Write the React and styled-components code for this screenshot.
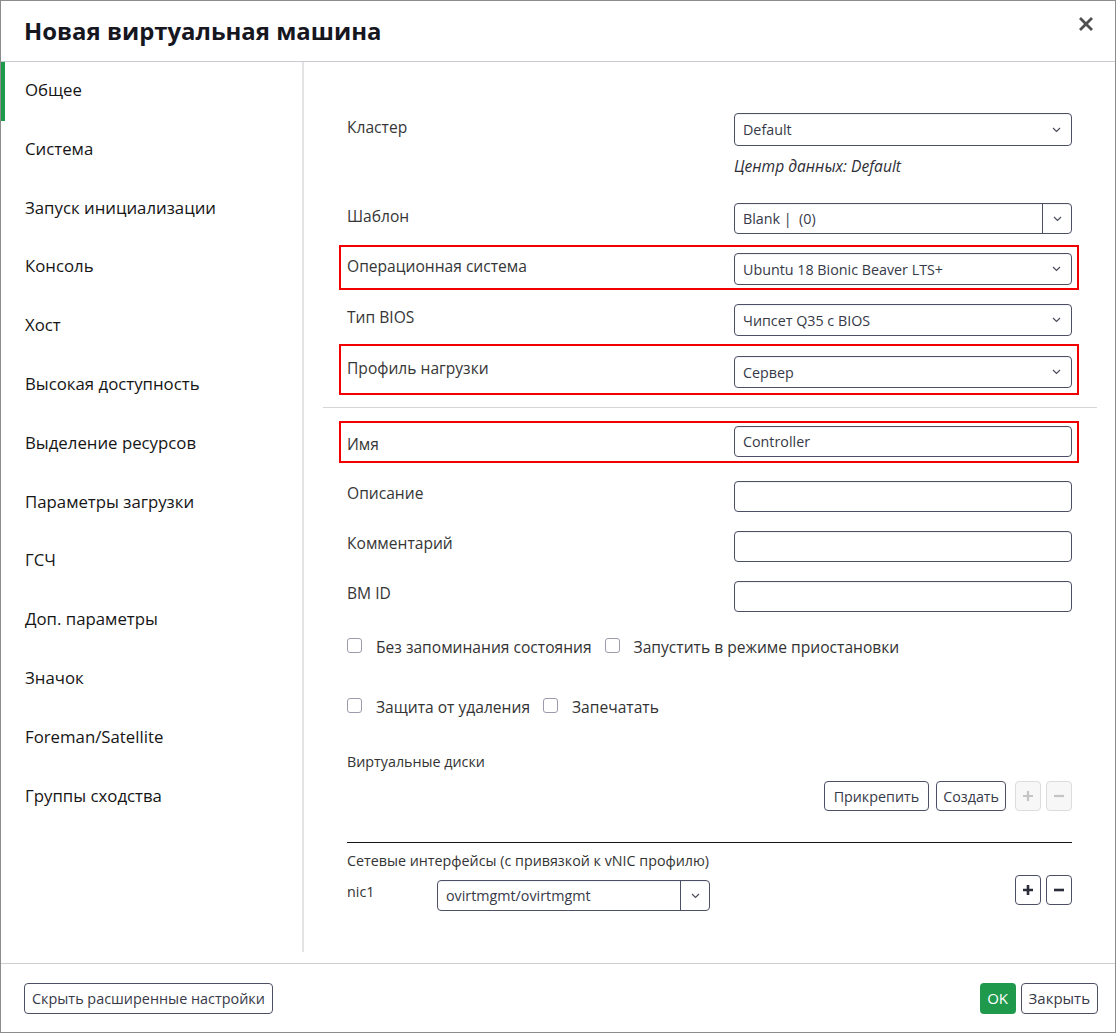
import React from "react";
import styled, { createGlobalStyle, css } from "styled-components";

const Global = createGlobalStyle`
  html, body { margin: 0; padding: 0; background: #fff; }
  body { font-family: "Open Sans", "Noto Sans", sans-serif; color: #151515; }
  * { box-sizing: border-box; }
`;

const Dialog = styled.div`
  width: 1116px;
  height: 1033px;
  border: 1px solid #8c8c8c;
  display: flex;
  flex-direction: column;
  background: #fff;
`;

const Header = styled.header`
  height: 61px;
  flex: none;
  display: flex;
  align-items: center;
  justify-content: space-between;
  padding: 0 20px 2px 23px;
  border-bottom: 1px solid #c9c9d1;
`;

const Title = styled.h1`
  margin: 0;
  font-size: 23.9px;
  font-weight: 700;
  color: #16161f;
`;

const CloseButton = styled.button`
  border: 0;
  background: none;
  padding: 0;
  width: 18px;
  height: 18px;
  display: flex;
  align-items: center;
  justify-content: center;
  margin-top: -12px;
`;

const Body = styled.div`
  flex: 1;
  display: flex;
  min-height: 0;
`;

const Sidebar = styled.nav`
  width: 303px;
  flex: none;
  display: flex;
  flex-direction: column;
  border-right: 2px solid #e4e4e4;
  margin-bottom: 11px;
`;

const NavItem = styled.div`
  height: 58.8px;
  flex: none;
  padding: 17px 0 0 20px;
  font-size: 16.8px;
  line-height: 22px;
  color: #151515;
  border-left: 4px solid ${(p) => (p.$active ? "#1f9a4d" : "transparent")};
`;

const Content = styled.section`
  flex: 1;
  padding: 51px 43px 0 43px;
  display: flex;
  flex-direction: column;
`;

const Spaced = styled.div`
  margin-top: ${(p) => p.$top || 0}px;
`;

const FieldRow = styled.div`
  display: grid;
  grid-template-columns: 387px 338px;
  align-items: start;
`;

const Marked = styled.div`
  margin: 0 -7px 0 -8px;
  border: 2px solid #f20000;
  padding: ${(p) => p.$pt}px 5px ${(p) => p.$pb}px 6px;
`;

const Label = styled.div`
  font-size: 15.6px;
  line-height: 22px;
  color: #363636;
  padding-top: ${(p) => (p.$pt != null ? p.$pt : 3)}px;
`;

const Hint = styled.div`
  margin-top: 9px;
  font-size: 15.6px;
  line-height: 22px;
  font-style: italic;
  color: #2e2e36;
`;

const boxBase = css`
  height: ${(p) => p.$h || 32}px;
  border: 1px solid #4d5064;
  border-radius: 4px;
  background: #fff;
  box-shadow: inset 0 1px 1px rgba(0, 0, 0, 0.06);
  font-size: 14.3px;
  color: #363948;
  display: flex;
  align-items: center;
`;

const SelectBox = styled.div`
  ${boxBase};
  padding: 0 10px 0 8px;
  justify-content: space-between;
`;

const SplitBox = styled.div`
  ${boxBase};
  width: ${(p) => p.$w || "100%"};
  overflow: hidden;
`;

const SplitText = styled.div`
  flex: 1;
  padding-left: 8px;
  height: 100%;
  display: flex;
  align-items: center;
`;

const SplitToggle = styled.div`
  width: 29px;
  height: 100%;
  border-left: 1px solid #4d5064;
  display: flex;
  align-items: center;
  justify-content: center;
`;

const TextInput = styled.div`
  ${boxBase};
  padding: 0 8px;
`;

const Chevron = () => (
  <svg width="9" height="6" viewBox="0 0 9 6">
    <polyline points="1,1 4.5,4.5 8,1" fill="none" stroke="#4a4d5c" strokeWidth="1.2" />
  </svg>
);

const Select = ({ children, h }) => (
  <SelectBox $h={h}>
    <span>{children}</span>
    <Chevron />
  </SelectBox>
);

const CheckRow = styled.div`
  display: flex;
  align-items: center;
  font-size: 15.6px;
  line-height: 22px;
  color: #333;
`;

const CheckItem = styled.label`
  display: flex;
  align-items: center;
  margin-right: 13px;
`;

const Box = styled.span`
  width: 15px;
  height: 15px;
  border: 1px solid #9a9cab;
  border-radius: 3px;
  background: #fff;
  margin-right: 14px;
  margin-top: -3px;
`;

const SmallLabel = styled.div`
  font-size: 14.3px;
  line-height: 20px;
  color: #333;
`;

const ButtonRow = styled.div`
  display: flex;
  justify-content: flex-end;
  align-items: center;
  gap: ${(p) => p.$gap || 7}px;
`;

const Button = styled.button`
  height: ${(p) => p.$h || 30}px;
  padding: 0 ${(p) => p.$px || 8}px;
  border: 1px solid #4d5064;
  border-radius: 4px;
  background: #fff;
  font-family: "Open Sans", sans-serif;
  font-size: ${(p) => p.$fs || 14.3}px;
  color: #363948;
  display: flex;
  align-items: center;
  justify-content: center;
`;

const IconButton = styled.button`
  width: 26px;
  height: 30px;
  padding: 0;
  border-radius: 4px;
  display: flex;
  align-items: center;
  justify-content: center;
  margin-left: ${(p) => p.$ml || 0}px;
  ${(p) =>
    p.$disabled
      ? css`
          border: 1px solid #dcdcdc;
          background: #f7f7f7;
        `
      : css`
          border: 1px solid #4d5064;
          background: #fff;
        `}
`;

const Divider = styled.hr`
  margin: 0;
  border: 0;
  border-top: 1px solid ${(p) => p.$color};
  margin-left: ${(p) => p.$ml || 0}px;
  margin-right: ${(p) => p.$mr || 0}px;
`;

const NicRow = styled.div`
  display: flex;
  align-items: flex-start;
`;

const NicName = styled.div`
  width: 90px;
  font-size: 14.3px;
  line-height: 20px;
  color: #333;
  padding-top: 2px;
`;

const NicButtons = styled.div`
  margin-left: auto;
  margin-top: -5px;
  display: flex;
  gap: 5px;
`;

const Footer = styled.footer`
  height: 69px;
  flex: none;
  border-top: 1px solid #cfcfcf;
  display: flex;
  align-items: center;
  justify-content: space-between;
  padding: 0 17px 0 23px;
`;

const OkButton = styled.button`
  height: 31px;
  width: 36px;
  border: 0;
  border-radius: 4px;
  background: #1f9a4d;
  color: #fff;
  font-family: "Open Sans", sans-serif;
  font-size: 15px;
  padding: 0;
`;

const Plus = ({ color, bold }) => (
  <svg width="12" height="12" viewBox="0 0 12 12">
    <path d="M6 1v10M1 6h10" stroke={color} strokeWidth={bold ? 2.6 : 2.2} />
  </svg>
);

const Minus = ({ color, bold }) => (
  <svg width="12" height="12" viewBox="0 0 12 12">
    <path d="M1 6h10" stroke={color} strokeWidth={bold ? 2.6 : 2.2} />
  </svg>
);

const nav = [
  "Общее",
  "Система",
  "Запуск инициализации",
  "Консоль",
  "Хост",
  "Высокая доступность",
  "Выделение ресурсов",
  "Параметры загрузки",
  "ГСЧ",
  "Доп. параметры",
  "Значок",
  "Foreman/Satellite",
  "Группы сходства",
];

export default function App() {
  return (
    <>
      <Global />
      <Dialog>
        <Header>
          <Title>Новая виртуальная машина</Title>
          <CloseButton aria-label="close">
            <svg width="14" height="14" viewBox="0 0 14 14">
              <path d="M2 2l10 10M12 2L2 12" stroke="#4f4f4f" strokeWidth="2.8" strokeLinecap="square" />
            </svg>
          </CloseButton>
        </Header>
        <Body>
          <Sidebar>
            {nav.map((n, i) => (
              <NavItem key={n} $active={i === 0}>
                {n}
              </NavItem>
            ))}
          </Sidebar>
          <Content>
            <FieldRow>
              <Label $pt={3}>Кластер</Label>
              <div>
                <Select h={33}>Default</Select>
                <Hint>Центр данных: Default</Hint>
              </div>
            </FieldRow>

            <Spaced $top={26}>
              <FieldRow>
                <Label $pt={2}>Шаблон</Label>
                <SplitBox $h={31}>
                  <SplitText>Blank |&nbsp; (0)</SplitText>
                  <SplitToggle>
                    <Chevron />
                  </SplitToggle>
                </SplitBox>
              </FieldRow>
            </Spaced>

            <Spaced $top={11}>
              <Marked $pt={6} $pb={3}>
                <FieldRow>
                  <Label $pt={2}>Операционная система</Label>
                  <Select>Ubuntu 18 Bionic Beaver LTS+</Select>
                </FieldRow>
              </Marked>
            </Spaced>

            <Spaced $top={14}>
              <FieldRow>
                <Label $pt={2}>Тип BIOS</Label>
                <Select>Чипсет Q35 с BIOS</Select>
              </FieldRow>
            </Spaced>

            <Spaced $top={8}>
              <Marked $pt={10} $pb={5}>
                <FieldRow>
                  <Label $pt={1}>Профиль нагрузки</Label>
                  <Select>Сервер</Select>
                </FieldRow>
              </Marked>
            </Spaced>

            <Spaced $top={12}>
              <Divider $color="#d6d6d6" $ml={-24} $mr={-25} />
            </Spaced>

            <Spaced $top={13}>
              <Marked $pt={3} $pb={4}>
                <FieldRow>
                  <Label $pt={7}>Имя</Label>
                  <TextInput $h={31}>Controller</TextInput>
                </FieldRow>
              </Marked>
            </Spaced>

            <Spaced $top={18}>
              <FieldRow>
                <Label $pt={1}>Описание</Label>
                <TextInput $h={31} />
              </FieldRow>
            </Spaced>

            <Spaced $top={19}>
              <FieldRow>
                <Label $pt={1}>Комментарий</Label>
                <TextInput $h={31} />
              </FieldRow>
            </Spaced>

            <Spaced $top={19}>
              <FieldRow>
                <Label $pt={1}>ВМ ID</Label>
                <TextInput $h={31} />
              </FieldRow>
            </Spaced>

            <Spaced $top={24}>
              <CheckRow>
                <CheckItem>
                  <Box />
                  Без запоминания состояния
                </CheckItem>
                <CheckItem>
                  <Box />
                  Запустить в режиме приостановки
                </CheckItem>
              </CheckRow>
            </Spaced>

            <Spaced $top={38}>
              <CheckRow>
                <CheckItem>
                  <Box />
                  Защита от удаления
                </CheckItem>
                <CheckItem>
                  <Box />
                  Запечатать
                </CheckItem>
              </CheckRow>
            </Spaced>

            <Spaced $top={34}>
              <SmallLabel>Виртуальные диски</SmallLabel>
            </Spaced>

            <Spaced $top={9}>
              <ButtonRow $gap={7}>
                <Button $px={9}>Прикрепить</Button>
                <Button $px={6}>Создать</Button>
                <IconButton $disabled $ml={2}>
                  <Plus color="#c4c4c4" />
                </IconButton>
                <IconButton $disabled $ml={-2}>
                  <Minus color="#c4c4c4" />
                </IconButton>
              </ButtonRow>
            </Spaced>

            <Spaced $top={31}>
              <Divider $color="#151515" />
            </Spaced>

            <Spaced $top={8}>
              <SmallLabel>Сетевые интерфейсы (с привязкой к vNIC профилю)</SmallLabel>
            </Spaced>

            <Spaced $top={9}>
              <NicRow>
                <NicName>nic1</NicName>
                <SplitBox $h={31} $w="273px">
                  <SplitText>ovirtmgmt/ovirtmgmt</SplitText>
                  <SplitToggle>
                    <Chevron />
                  </SplitToggle>
                </SplitBox>
                <NicButtons>
                  <IconButton>
                    <Plus color="#2b2d3a" bold />
                  </IconButton>
                  <IconButton>
                    <Minus color="#2b2d3a" bold />
                  </IconButton>
                </NicButtons>
              </NicRow>
            </Spaced>
          </Content>
        </Body>
        <Footer>
          <Button $h={31} $fs={14.4} $px={7}>
            Скрыть расширенные настройки
          </Button>
          <ButtonRow $gap={5}>
            <OkButton>OK</OkButton>
            <Button $h={31} $fs={15} $px={7}>
              Закрыть
            </Button>
          </ButtonRow>
        </Footer>
      </Dialog>
    </>
  );
}
